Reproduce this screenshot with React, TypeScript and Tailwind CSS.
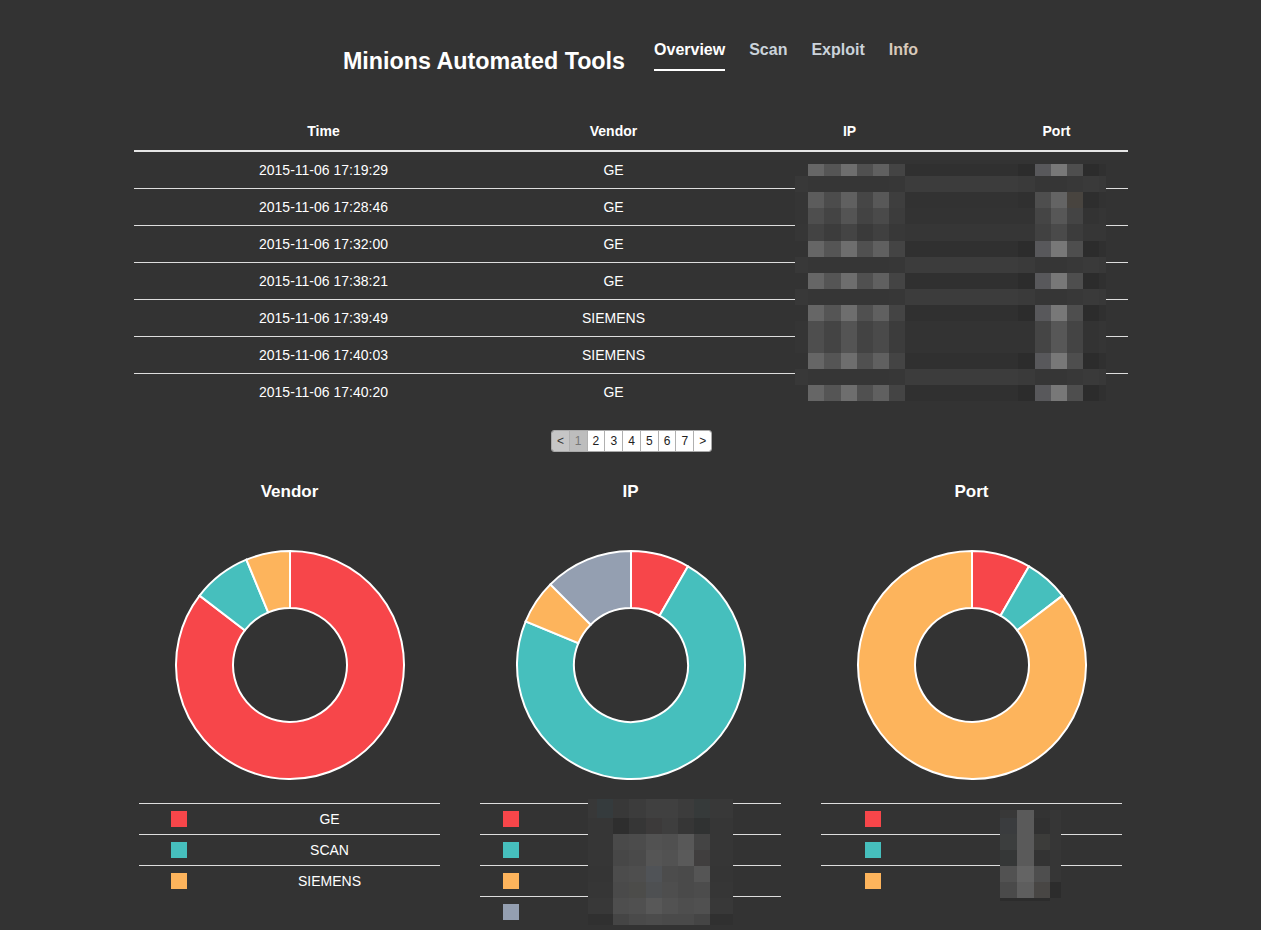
import React from 'react'

const RED = '#F7464A'
const TEAL = '#46BFBD'
const ORANGE = '#FDB45C'
const GRAY = '#949FB1'

const rows = [
  { time: '2015-11-06 17:19:29', vendor: 'GE' },
  { time: '2015-11-06 17:28:46', vendor: 'GE' },
  { time: '2015-11-06 17:32:00', vendor: 'GE' },
  { time: '2015-11-06 17:38:21', vendor: 'GE' },
  { time: '2015-11-06 17:39:49', vendor: 'SIEMENS' },
  { time: '2015-11-06 17:40:03', vendor: 'SIEMENS' },
  { time: '2015-11-06 17:40:20', vendor: 'GE' },
]

/* ── pixelated (redacted) blocks ── */
const T = ['#333333', '#666666', '#555555', '#6e6e6e', '#505050', '#606060', '#444444', '#303030', '#2c2c2c', '#58585b', '#787878', '#4e4e4e', '#2c2c2c', '#303030']
const T2 = ['#353535', '#5c5c5c', '#4c4c4c', '#606060', '#464646', '#585858', '#3e3e3e', '#323232', '#303030', '#4e4e4e', '#646464', '#48443f', '#2e2e2e', '#323232']
const M = ['#353535', '#4e4e4e', '#444444', '#545454', '#434343', '#4a4a4a', '#3c3c3c', '#333333', '#333333', '#454545', '#575757', '#444444', '#333333', '#353535']
const M2 = ['#363636', '#434343', '#3c3c3c', '#444444', '#3a3a3a', '#404040', '#383838', '#363636', '#363636', '#414141', '#4a4a4a', '#3c3c3c', '#363636', '#363636']
const B = ['#383838', '#363636', '#363636', '#363636', '#363636', '#363636', '#373737', '#3c3c3c', '#3a3a3a', '#363636', '#363636', '#383838', '#3a3a3a', '#383838']

const tableMosaic = {
  cols: [13, 16, 17, 16, 16, 16, 16, 113, 17, 16, 16, 16, 16, 7],
  rows: [12, 16, 16, 16, 17, 16, 16, 16, 16, 16, 16, 16, 16, 16, 16],
  cells: [T, B, T2, M, M2, T, B, T, B, T, M, M, T, B, T],
}

const ipLegendMosaic = {
  cols: [9, 16, 16, 17, 16, 16, 16, 16, 16, 7],
  rows: [19, 16, 16, 16, 16, 16, 16, 11],
  cells: [
    ['#383838', '#353b3d', '#383838', '#3c3c3c', '#404040', '#404040', '#3c3c3c', '#363a3a', '#383838', '#383838'],
    ['#363636', '#363636', '#2e2e2e', '#363636', '#3c3a3a', '#3e3e3e', '#363636', '#303232', '#363636', '#363636'],
    ['#363636', '#363636', '#4a4a4a', '#4c4c4c', '#525252', '#505050', '#585858', '#444444', '#363636', '#363636'],
    ['#363636', '#363636', '#474747', '#4a4a4a', '#555555', '#525252', '#5a5a5a', '#403e3e', '#363636', '#363636'],
    ['#353535', '#353535', '#4c4c4c', '#4e4e4e', '#505357', '#4c4c4c', '#4a4a4a', '#555555', '#353535', '#353535'],
    ['#363636', '#363636', '#4a4a4a', '#4c4c4a', '#4e5052', '#4e4e4e', '#4a4a4a', '#4c4c4c', '#363636', '#363636'],
    ['#383838', '#383838', '#4e4e4e', '#505050', '#585858', '#525252', '#4e4e4e', '#505050', '#383838', '#383838'],
    ['#303030', '#303030', '#454545', '#4a4a4a', '#4c4c4c', '#4a4a4a', '#4a4a4a', '#454545', '#303030', '#303030'],
  ],
}

const portLegendMosaic = {
  cols: [17, 17, 16, 11],
  rows: [8, 16, 16, 16, 16, 16, 3],
  cells: [
    ['#383838', '#5a5a5a', '#333333', '#363636'],
    ['#3a3c3e', '#5a5a5a', '#313131', '#363636'],
    ['#3c3e3e', '#5a5a5a', '#3c3c3a', '#363636'],
    ['#353737', '#5a5a5a', '#333333', '#363636'],
    ['#525252', '#646464', '#4e4e4e', '#363636'],
    ['#4a4a4a', '#5e5e5e', '#484644', '#2c2c2c'],
    ['#2c2c2c', '#2c2c2c', '#2c2c2c', '#333333'],
  ],
}

function Mosaic({ cols, rows, cells, className }: { cols: number[]; rows: number[]; cells: string[][]; className: string }) {
  return (
    <div
      className={`absolute grid ${className}`}
      style={{ gridTemplateColumns: cols.map((c) => `${c}px`).join(' '), gridTemplateRows: rows.map((r) => `${r}px`).join(' ') }}
    >
      {cells.flatMap((row, i) => row.map((c, j) => <div key={`${i}-${j}`} style={{ background: c }} />))}
    </div>
  )
}

/* ── donut chart ── */
function Donut({ data }: { data: { value: number; color: string }[] }) {
  const cx = 116, cy = 116, R = 114, r = 57
  const total = data.reduce((s, d) => s + d.value, 0)
  const pt = (rad: number, deg: number) => {
    const a = (deg * Math.PI) / 180
    return `${cx + rad * Math.sin(a)} ${cy - rad * Math.cos(a)}`
  }
  let start = 0
  return (
    <svg width="232" height="232" viewBox="0 0 232 232">
      {data.map((d, i) => {
        const sweep = (d.value / total) * 360
        const end = start + sweep
        const large = sweep > 180 ? 1 : 0
        const path = `M ${pt(R, start)} A ${R} ${R} 0 ${large} 1 ${pt(R, end)} L ${pt(r, end)} A ${r} ${r} 0 ${large} 0 ${pt(r, start)} Z`
        start = end
        return <path key={i} d={path} fill={d.color} stroke="#ffffff" strokeWidth="2" />
      })}
    </svg>
  )
}

function Legend({ items, firstCol, children }: { items: { color: string; label?: string }[]; firstCol: number; children?: React.ReactNode }) {
  return (
    <div className="relative w-[301px]">
      {items.map((it, i) => (
        <div key={i} className="flex h-[31px] items-center border-t border-[#dedede]">
          <div className="flex items-center justify-center" style={{ width: firstCol }}>
            <span className="block h-4 w-4" style={{ background: it.color }} />
          </div>
          <div className="flex-1 text-center text-[14px] text-white">{it.label}</div>
        </div>
      ))}
      {children}
    </div>
  )
}

export default function App() {
  return (
    <div className="min-h-[930px] bg-[#333333] font-['Liberation_Sans',Arial,sans-serif] text-white">

      {/* Header */}
      <header className="flex items-start justify-center pt-[40px]">
        <h1 className="mt-[8px] text-[23.3px] font-bold leading-[27px] text-white">Minions Automated Tools</h1>
        <nav className="ml-[29px] mt-[1px] flex gap-6 text-[16px] font-bold leading-[18px]">
          <span className="border-b-2 border-white pb-[10px] text-white">Overview</span>
          <span className="border-b-2 border-transparent pb-[10px] text-[#cbd3db]">Scan</span>
          <span className="border-b-2 border-transparent pb-[10px] text-[#cbd3db]">Exploit</span>
          <span className="border-b-2 border-transparent pb-[10px] text-[#d8c9ba]">Info</span>
        </nav>
      </header>

      {/* Table */}
      <div className="relative mx-auto mt-[37px] w-[994px] text-[14px]">
        <div className="grid h-[40px] grid-cols-[380px_200px_272px_142px] items-center border-b-2 border-[#e6e6e6] text-center font-bold">
          <div>Time</div>
          <div>Vendor</div>
          <div>IP</div>
          <div>Port</div>
        </div>
        {rows.map((r, i) => (
          <div
            key={i}
            className={`grid h-[37px] grid-cols-[380px_200px_272px_142px] items-center text-center ${i < rows.length - 1 ? 'border-b border-[#dedede]' : ''}`}
          >
            <div>{r.time}</div>
            <div>{r.vendor}</div>
            <div />
            <div />
          </div>
        ))}
        <Mosaic {...tableMosaic} className="left-[661px] top-[52px]" />
      </div>

      {/* Pagination */}
      <div className="mt-[19px] flex justify-center pl-[2px]">
        <div className="flex h-[22px] w-[161px] overflow-hidden rounded-[3px] border border-[#a9a9a9] text-[12px]">
          <span className="flex flex-1 items-center justify-center bg-[#c6c6c6] text-[#333]">&lt;</span>
          <span className="flex flex-1 items-center justify-center border-l border-[#b0b0b0] bg-[#bdbdbd] text-[#777]">1</span>
          {['2', '3', '4', '5', '6', '7', '>'].map((p) => (
            <span key={p} className="flex flex-1 items-center justify-center border-l border-[#b0b0b0] bg-white text-[#222]">{p}</span>
          ))}
        </div>
      </div>

      {/* Charts */}
      <div className="mx-auto mt-[30px] grid w-[1023px] grid-cols-3">
        <div className="flex flex-col items-center">
          <h2 className="text-[17px] font-bold leading-[20px]">Vendor</h2>
          <div className="mt-[47px]">
            <Donut data={[{ value: 41, color: RED }, { value: 4, color: TEAL }, { value: 3, color: ORANGE }]} />
          </div>
          <div className="mt-[22px]">
            <Legend firstCol={80} items={[{ color: RED, label: 'GE' }, { color: TEAL, label: 'SCAN' }, { color: ORANGE, label: 'SIEMENS' }]} />
          </div>
        </div>

        <div className="flex flex-col items-center">
          <h2 className="text-[17px] font-bold leading-[20px]">IP</h2>
          <div className="mt-[47px]">
            <Donut data={[{ value: 4, color: RED }, { value: 35, color: TEAL }, { value: 3, color: ORANGE }, { value: 6, color: GRAY }]} />
          </div>
          <div className="mt-[22px]">
            <Legend firstCol={62} items={[{ color: RED }, { color: TEAL }, { color: ORANGE }, { color: GRAY }]}>
              <Mosaic {...ipLegendMosaic} className="left-[108px] top-[-4px]" />
            </Legend>
          </div>
        </div>

        <div className="flex flex-col items-center">
          <h2 className="text-[17px] font-bold leading-[20px]">Port</h2>
          <div className="mt-[47px]">
            <Donut data={[{ value: 4, color: RED }, { value: 3, color: TEAL }, { value: 41, color: ORANGE }]} />
          </div>
          <div className="mt-[22px]">
            <Legend firstCol={104} items={[{ color: RED }, { color: TEAL }, { color: ORANGE }]}>
              <Mosaic {...portLegendMosaic} className="left-[179px] top-[7px]" />
            </Legend>
          </div>
        </div>
      </div>
    </div>
  )
}
